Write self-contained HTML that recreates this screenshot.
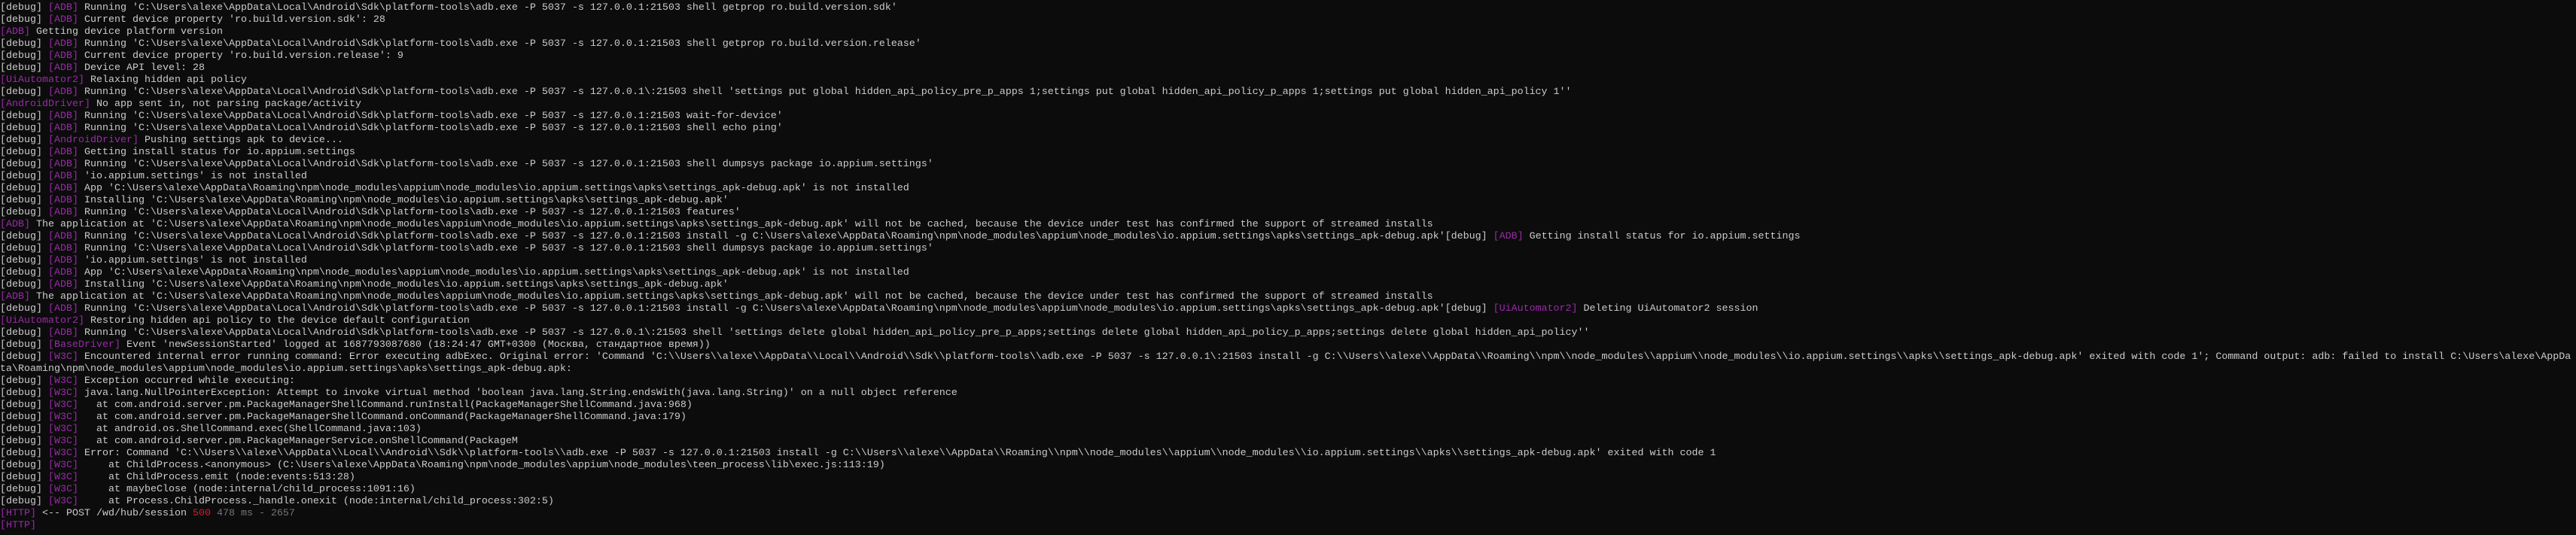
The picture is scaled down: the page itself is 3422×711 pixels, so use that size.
<!DOCTYPE html>
<html><head><meta charset="utf-8">
<style>
html,body{margin:0;padding:0;background:#0c0c0c;width:3422px;height:711px;overflow:hidden}
pre{margin:0;position:absolute;left:0;top:-13px;font-family:"Liberation Mono","DejaVu Sans Mono","Noto Sans CJK SC",monospace;font-size:13.33px;line-height:16px;color:#cccccc;white-space:pre}
.m{color:#9a2aa8}
.r{color:#d0202a}
.g{color:#767676}
</style></head><body>
<pre>[debug] <span class="m">[ADB]</span> Running 'C:\Users\alexe\AppData\Local\Android\Sdk\platform-tools\adb.exe -P 5037 -s 127.0.0.1:21503 shell getprop ro.build.version.sdk'
[debug] <span class="m">[ADB]</span> Running 'C:\Users\alexe\AppData\Local\Android\Sdk\platform-tools\adb.exe -P 5037 -s 127.0.0.1:21503 shell getprop ro.build.version.sdk'
[debug] <span class="m">[ADB]</span> Current device property 'ro.build.version.sdk': 28
<span class="m">[ADB]</span> Getting device platform version
[debug] <span class="m">[ADB]</span> Running 'C:\Users\alexe\AppData\Local\Android\Sdk\platform-tools\adb.exe -P 5037 -s 127.0.0.1:21503 shell getprop ro.build.version.release'
[debug] <span class="m">[ADB]</span> Current device property 'ro.build.version.release': 9
[debug] <span class="m">[ADB]</span> Device API level: 28
<span class="m">[UiAutomator2]</span> Relaxing hidden api policy
[debug] <span class="m">[ADB]</span> Running 'C:\Users\alexe\AppData\Local\Android\Sdk\platform-tools\adb.exe -P 5037 -s 127.0.0.1\:21503 shell 'settings put global hidden_api_policy_pre_p_apps 1;settings put global hidden_api_policy_p_apps 1;settings put global hidden_api_policy 1''
<span class="m">[AndroidDriver]</span> No app sent in, not parsing package/activity
[debug] <span class="m">[ADB]</span> Running 'C:\Users\alexe\AppData\Local\Android\Sdk\platform-tools\adb.exe -P 5037 -s 127.0.0.1:21503 wait-for-device'
[debug] <span class="m">[ADB]</span> Running 'C:\Users\alexe\AppData\Local\Android\Sdk\platform-tools\adb.exe -P 5037 -s 127.0.0.1:21503 shell echo ping'
[debug] <span class="m">[AndroidDriver]</span> Pushing settings apk to device...
[debug] <span class="m">[ADB]</span> Getting install status for io.appium.settings
[debug] <span class="m">[ADB]</span> Running 'C:\Users\alexe\AppData\Local\Android\Sdk\platform-tools\adb.exe -P 5037 -s 127.0.0.1:21503 shell dumpsys package io.appium.settings'
[debug] <span class="m">[ADB]</span> 'io.appium.settings' is not installed
[debug] <span class="m">[ADB]</span> App 'C:\Users\alexe\AppData\Roaming\npm\node_modules\appium\node_modules\io.appium.settings\apks\settings_apk-debug.apk' is not installed
[debug] <span class="m">[ADB]</span> Installing 'C:\Users\alexe\AppData\Roaming\npm\node_modules\io.appium.settings\apks\settings_apk-debug.apk'
[debug] <span class="m">[ADB]</span> Running 'C:\Users\alexe\AppData\Local\Android\Sdk\platform-tools\adb.exe -P 5037 -s 127.0.0.1:21503 features'
<span class="m">[ADB]</span> The application at 'C:\Users\alexe\AppData\Roaming\npm\node_modules\appium\node_modules\io.appium.settings\apks\settings_apk-debug.apk' will not be cached, because the device under test has confirmed the support of streamed installs
[debug] <span class="m">[ADB]</span> Running 'C:\Users\alexe\AppData\Local\Android\Sdk\platform-tools\adb.exe -P 5037 -s 127.0.0.1:21503 install -g C:\Users\alexe\AppData\Roaming\npm\node_modules\appium\node_modules\io.appium.settings\apks\settings_apk-debug.apk'[debug] <span class="m">[ADB]</span> Getting install status for io.appium.settings
[debug] <span class="m">[ADB]</span> Running 'C:\Users\alexe\AppData\Local\Android\Sdk\platform-tools\adb.exe -P 5037 -s 127.0.0.1:21503 shell dumpsys package io.appium.settings'
[debug] <span class="m">[ADB]</span> 'io.appium.settings' is not installed
[debug] <span class="m">[ADB]</span> App 'C:\Users\alexe\AppData\Roaming\npm\node_modules\appium\node_modules\io.appium.settings\apks\settings_apk-debug.apk' is not installed
[debug] <span class="m">[ADB]</span> Installing 'C:\Users\alexe\AppData\Roaming\npm\node_modules\io.appium.settings\apks\settings_apk-debug.apk'
<span class="m">[ADB]</span> The application at 'C:\Users\alexe\AppData\Roaming\npm\node_modules\appium\node_modules\io.appium.settings\apks\settings_apk-debug.apk' will not be cached, because the device under test has confirmed the support of streamed installs
[debug] <span class="m">[ADB]</span> Running 'C:\Users\alexe\AppData\Local\Android\Sdk\platform-tools\adb.exe -P 5037 -s 127.0.0.1:21503 install -g C:\Users\alexe\AppData\Roaming\npm\node_modules\appium\node_modules\io.appium.settings\apks\settings_apk-debug.apk'[debug] <span class="m">[UiAutomator2]</span> Deleting UiAutomator2 session
<span class="m">[UiAutomator2]</span> Restoring hidden api policy to the device default configuration
[debug] <span class="m">[ADB]</span> Running 'C:\Users\alexe\AppData\Local\Android\Sdk\platform-tools\adb.exe -P 5037 -s 127.0.0.1\:21503 shell 'settings delete global hidden_api_policy_pre_p_apps;settings delete global hidden_api_policy_p_apps;settings delete global hidden_api_policy''
[debug] <span class="m">[BaseDriver]</span> Event 'newSessionStarted' logged at 1687793087680 (18:24:47 GMT+0300 (Москва, стандартное время))
[debug] <span class="m">[W3C]</span> Encountered internal error running command: Error executing adbExec. Original error: 'Command 'C:\\Users\\alexe\\AppData\\Local\\Android\\Sdk\\platform-tools\\adb.exe -P 5037 -s 127.0.0.1\:21503 install -g C:\\Users\\alexe\\AppData\\Roaming\\npm\\node_modules\\appium\\node_modules\\io.appium.settings\\apks\\settings_apk-debug.apk' exited with code 1'; Command output: adb: failed to install C:\Users\alexe\AppDa
ta\Roaming\npm\node_modules\appium\node_modules\io.appium.settings\apks\settings_apk-debug.apk:
[debug] <span class="m">[W3C]</span> Exception occurred while executing:
[debug] <span class="m">[W3C]</span> java.lang.NullPointerException: Attempt to invoke virtual method 'boolean java.lang.String.endsWith(java.lang.String)' on a null object reference
[debug] <span class="m">[W3C]</span>   at com.android.server.pm.PackageManagerShellCommand.runInstall(PackageManagerShellCommand.java:968)
[debug] <span class="m">[W3C]</span>   at com.android.server.pm.PackageManagerShellCommand.onCommand(PackageManagerShellCommand.java:179)
[debug] <span class="m">[W3C]</span>   at android.os.ShellCommand.exec(ShellCommand.java:103)
[debug] <span class="m">[W3C]</span>   at com.android.server.pm.PackageManagerService.onShellCommand(PackageM
[debug] <span class="m">[W3C]</span> Error: Command 'C:\\Users\\alexe\\AppData\\Local\\Android\\Sdk\\platform-tools\\adb.exe -P 5037 -s 127.0.0.1:21503 install -g C:\\Users\\alexe\\AppData\\Roaming\\npm\\node_modules\\appium\\node_modules\\io.appium.settings\\apks\\settings_apk-debug.apk' exited with code 1
[debug] <span class="m">[W3C]</span>     at ChildProcess.&lt;anonymous&gt; (C:\Users\alexe\AppData\Roaming\npm\node_modules\appium\node_modules\teen_process\lib\exec.js:113:19)
[debug] <span class="m">[W3C]</span>     at ChildProcess.emit (node:events:513:28)
[debug] <span class="m">[W3C]</span>     at maybeClose (node:internal/child_process:1091:16)
[debug] <span class="m">[W3C]</span>     at Process.ChildProcess._handle.onexit (node:internal/child_process:302:5)
<span class="m">[HTTP]</span> &lt;-- POST /wd/hub/session <span class="r">500</span> <span class="g">478 ms - 2657</span>
<span class="m">[HTTP]</span>
</pre>
</body></html>
